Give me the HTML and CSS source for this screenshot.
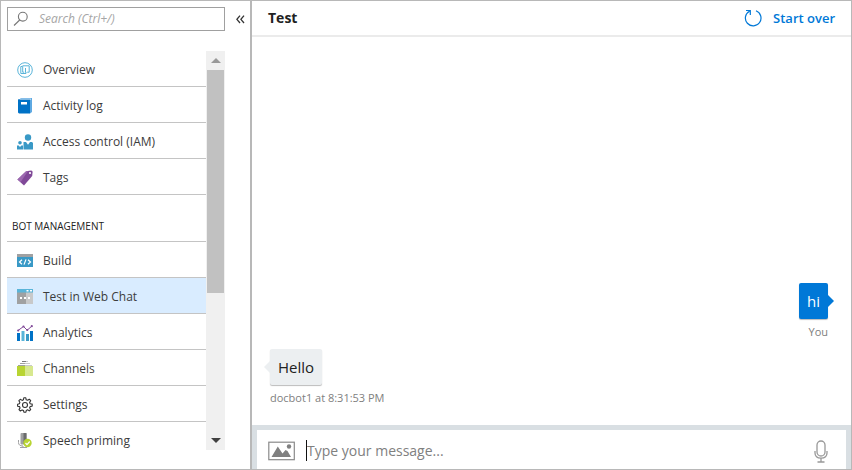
FILE: index.html
```html
<!DOCTYPE html>
<html lang="en">
<head>
<meta charset="utf-8">
<title>Test in Web Chat</title>
<link rel="stylesheet" href="styles.css">
</head>
<body>
<div class="app">
  <aside class="sidebar">
    <div class="search-row">
      <label class="search">
        <svg width="16" height="16" viewBox="0 0 16 16" fill="none" stroke="#777" stroke-width="1.1" aria-hidden="true"><circle cx="9.800" cy="5.700" r="4.400"/><path d="M6.700 9 1 14.500"/></svg>
        <input type="search" aria-label="Search" placeholder="Search (Ctrl+/)">
      </label>
      <button class="collapse" aria-label="Collapse menu">
        <svg width="9" height="9" viewBox="0 0 9 9" fill="none" stroke="#333" stroke-width="1.3"><path d="M4 .7.9 4.3 4 8M8 .7 4.9 4.3 8 8"/></svg>
      </button>
    </div>
    <div class="menu">
      <nav class="list">
        <a href="#"><svg width="16" height="16" viewBox="0 0 16 16" fill="none" stroke="#59b4d9" aria-hidden="true"><circle cx="8" cy="8" r="7.3"/><path d="M5 4.5H3.8v7H9V10M5.700 3.800h6.500v6.400h-2M5.700 3.800v6.400h1.500M8.500 6v4.500"/></svg>Overview</a>
        <a href="#"><svg width="16" height="16" viewBox="0 0 16 16" aria-hidden="true"><path fill="#5ea9e2" d="M3 0h12v14l-2 1.500z"/><path fill="#0072c6" d="M1 1.500 2.500 1H13v14.500H2L1 14.500z"/><path fill="#fff" d="M4 4h6v2.600H4zM2.500.700H14v.7H2.500z"/></svg>Activity log</a>
        <a href="#"><svg width="16" height="16" viewBox="0 0 16 16" fill="#3999c6" aria-hidden="true"><circle cx="11" cy="3.500" r="3.200"/><circle cx="3" cy="8.700" r="1.800"/><path d="M6.500 8H9l2 2.700L13 8h2l1 1v6.500H6.500zM0 11.500h1.700L3 13l1.400-1.500H6v4H0z"/></svg>Access control (IAM)</a>
        <a href="#"><svg width="16" height="16" viewBox="0 0 16 16" aria-hidden="true"><path fill="#804998" d="m.4 9.500 8.700-8.300 5-.8q1.500 0 1.500 1.500L15.200 6 7 15.500z"/><path fill="#9c68b0" d="m.4 9.500 8.700-8.300L11 1 3.700 12z"/><circle cx="13" cy="3" r="1.100" fill="#fff"/></svg>Tags</a>
        <h2>BOT MANAGEMENT</h2>
        <a href="#"><svg width="16" height="16" viewBox="0 0 16 16" aria-hidden="true"><path fill="#a0a1a2" d="M0 1h16v4H0z"/><path fill="#3999c6" d="M0 4h16v10H0z"/><path fill="none" stroke="#fff" stroke-width="1.200" d="M5 6.800 2.500 9 5 11.200M11 6.800 13.500 9 11 11.200M9 6.400l-2 5.200"/></svg>Build</a>
        <a href="#" class="active" aria-current="page"><svg width="16" height="16" viewBox="0 0 16 16" aria-hidden="true"><path fill="#a0a1a2" d="M0 0h9v15H0z"/><path fill="#c8c9ca" d="M9 3h7v12H9z"/><path fill="#59b4d9" d="M0 0h16v3.500H0z"/><path fill="#fff" d="M9.500 1h2v1.500h-2zM13 1h2v1.500h-2zM3 8h2v2H3zM7 8h2v2H7zM11 8h2v2h-2z"/></svg>Test in Web Chat</a>
        <a href="#"><svg width="16" height="16" viewBox="0 0 16 16" aria-hidden="true"><path fill="#0072c6" d="M0 8h3v8H0zM13 6h3v10h-3z"/><path fill="#59b4d9" d="M4.500 6h3v10h-3z"/><path fill="#3999c6" d="M9 9h3v7H9z"/><path fill="none" stroke="#804998" d="m1 5.500 5.500-4 3.700 3.700L15 1"/><g fill="#804998"><circle cx="1.200" cy="5.500" r="1.100"/><circle cx="6.500" cy="1.500" r="1.100"/><circle cx="10.200" cy="5" r="1.100"/><circle cx="14.800" cy="1.200" r="1.100"/></g></svg>Analytics</a>
        <a href="#"><svg width="16" height="16" viewBox="0 0 16 16" aria-hidden="true"><path fill="#7a7a7a" d="M5 0h4v1H5z"/><path fill="#c8c9ca" d="M9 0h2v1H9zM8 2h5v1H8zM8 4h7v1H8z"/><path fill="#a0a1a2" d="M3 2h5v1H3zM1 4h7v1H1z"/><path fill="#b8d432" d="M0 5h8v10H0z"/><path fill="#d7e88f" d="M8 5h8v10H8z"/></svg>Channels</a>
        <a href="#"><svg width="16" height="16" viewBox="0 0 16 16" fill="none" stroke="#333" stroke-width="1.100" stroke-linejoin="round" aria-hidden="true"><path d="m6.800.800-.4 2-1.300.6-1.800-1.100-1.400 1.400 1 1.800-.6 1.300-1.700.4v2l1.900.4.600 1.300-1.100 1.700 1.400 1.400 1.700-1.100 1.400.6.400 1.700h2l.4-1.800 1.300-.6 1.700 1.100 1.400-1.400-1.100-1.700.6-1.300 2-.4v-2l-2-.4-.6-1.300 1.100-1.700-1.400-1.500-1.700 1.100-1.400-.5-.4-2z"/><circle cx="8" cy="8" r="2.500"/></svg>Settings</a>
        <a href="#"><svg width="16" height="16" viewBox="0 0 16 16" aria-hidden="true"><path fill="none" stroke="#a0a1a2" d="M1.500 7v2.500q0 3.500 4.500 3.500M6 13v2M3 14.500h7"/><rect x="3.500" width="6" height="11.500" rx="1" fill="#a0a1a2"/><path fill="#6b6c6d" d="M6.500 0h3v11h-3z"/><circle cx="10.500" cy="10" r="4.200" fill="#b8d432"/><path fill="none" stroke="#fff" stroke-width="1.200" d="m8.500 10 1.500 1.700 2.700-3.200"/></svg>Speech priming</a>
      </nav>
      <div class="scrollbar" aria-hidden="true">
        <span class="arrow up"></span>
        <span class="thumb"></span>
        <span class="arrow down"></span>
      </div>
    </div>
  </aside>
  <main class="chat">
    <header>
      <h1>Test</h1>
      <button class="restart">
        <svg width="18" height="18" viewBox="0 0 18 18" fill="none" stroke="#0078d7" stroke-width="1.200" aria-hidden="true"><path d="M12 1.800A7.800 7.800 0 1 1 5.500 2.200M2 1.500h4.300V6"/></svg>
        Start over
      </button>
    </header>
    <section class="messages" aria-label="Conversation">
      <div class="message mine"><p class="bubble">hi</p><span class="meta">You</span></div>
      <div class="message"><p class="bubble">Hello</p><span class="meta">docbot1 at 8:31:53 PM</span></div>
    </section>
    <form class="composer">
      <button type="button" aria-label="Upload image">
        <svg width="28" height="20" viewBox="0 0 28 20" aria-hidden="true"><rect x=".8" y="1.200" width="25.500" height="17.500" fill="none" stroke="#8a8a8a" stroke-width="1.200"/><path fill="#808080" d="m3.500 16 6.300-10.500 4.700 7 3-3.500 2 1 3.500 6z"/><circle cx="21" cy="5.500" r="2.200" fill="#808080"/></svg>
      </button>
      <span class="caret" aria-hidden="true"></span>
      <input type="text" aria-label="Message" placeholder="Type your message...">
      <button type="button" aria-label="Speak">
        <svg width="14" height="24" viewBox="0 0 14 24" fill="none" stroke="#999" stroke-width="1.300" aria-hidden="true"><rect x="3" y="2" width="8" height="15" rx="4"/><path d="M1 12v2q0 5 6 5.200Q13 19 13 14v-2M7 19v4M3.500 23h7"/></svg>
      </button>
    </form>
  </main>
</div>
</body>
</html>
```
FILE: styles.css
```css
* {
  box-sizing: border-box;
}

body {
  margin: 0;
  background: #fff;
  color: #3c3c3c;
  font: 12px/20px "Segoe UI", "Open Sans", "Noto Sans", sans-serif;
}

h1, h2, p {
  margin: 0;
}

button, input {
  min-width: 0;
  padding: 0;
  border: 0;
  background: none;
  color: inherit;
  font: inherit;
  outline: 0;
}

svg {
  display: block;
  flex: none;
}

.app {
  display: grid;
  grid-template-columns: 251px 1fr;
  height: 100vh;
  border: 1px solid #b8b8b8;
  overflow: hidden;
}

.sidebar {
  display: flex;
  flex-direction: column;
  gap: 20px;
  min-height: 0;
  padding: 6px 5px 19px 6px;
  border-right: 2px solid #b8b8b8;
}

.search-row {
  display: flex;
  align-items: center;
  gap: 11px;
}

.search {
  display: flex;
  align-items: center;
  flex: 1;
  gap: 10px;
  height: 24px;
  padding: 0 5px;
  border: 1px solid #a0a0a0;
}

.search input {
  flex: 1;
  font-style: italic;
}

.search input::placeholder {
  color: #a6a6a6;
  opacity: 1;
}

.menu {
  display: flex;
  flex: 1;
  min-height: 0;
  margin-right: 20px;
}

.list {
  flex: 1;
  overflow: hidden;
}

.list a {
  display: flex;
  align-items: center;
  gap: 10px;
  height: 36px;
  padding: 2px 10px 0;
  border-bottom: 1px solid #c4c4c4;
  color: inherit;
  text-decoration: none;
}

.list .active {
  background: #d9ecff;
}

.list h2 {
  height: 47px;
  padding: 21px 5px 0;
  border-bottom: 1px solid #c4c4c4;
  font-size: 10px;
  font-weight: 400;
  color: #222;
}

.scrollbar {
  display: flex;
  flex-direction: column;
  width: 19px;
  padding: 0 1px;
  background: #f0f0f0;
}

.arrow {
  display: flex;
  align-items: center;
  justify-content: center;
  height: 19px;
}

.arrow::before {
  content: "";
  border: 5px solid transparent;
  border-top-width: 0;
  border-bottom-color: #999;
}

.down {
  margin-top: auto;
}

.down::before {
  border-width: 5px 5px 0;
  border-top-color: #404040;
}

.thumb {
  height: 56%;
  background: #c1c1c1;
}

.chat {
  display: flex;
  flex-direction: column;
  min-width: 0;
  min-height: 0;
}

header {
  display: flex;
  align-items: center;
  justify-content: space-between;
  height: 36px;
  padding: 0 16px;
  border-bottom: 2px solid #ebebeb;
}

h1 {
  font-size: 14px;
  font-weight: 700;
  color: #222;
}

.restart {
  display: flex;
  align-items: center;
  gap: 11px;
  color: #0078d7;
  font-size: 13px;
  font-weight: 600;
}

.messages {
  display: flex;
  flex: 1;
  flex-direction: column;
  justify-content: flex-end;
  gap: 7px;
  min-height: 0;
  padding: 0 23px 17px 18px;
}

.message {
  display: flex;
  flex-direction: column;
  align-items: flex-start;
  gap: 3px;
}

.mine {
  align-items: flex-end;
}

.bubble {
  position: relative;
  padding: 8px;
  border-radius: 2px;
  background: #eceff1;
  box-shadow: 0 1px 1px #0004;
  color: #222;
  font-size: 15px;
  line-height: 20px;
}

.bubble::before {
  content: "";
  position: absolute;
  top: 12px;
  right: 100%;
  border: 6px solid transparent;
  border-left-width: 0;
  border-right-color: #eceff1;
}

.mine .bubble {
  background: #0078d7;
  color: #fff;
}

.mine .bubble::before {
  right: auto;
  left: 100%;
  border-width: 6px 0 6px 6px;
  border-left-color: #0078d7;
}

.meta {
  color: #808080;
  font-size: 11px;
}

.composer {
  display: flex;
  align-items: center;
  height: 44px;
  padding: 2px 18px 0 11px;
  border: 5px solid #d9dfe3;
  border-bottom: 0;
}

.caret {
  width: 1px;
  height: 21px;
  margin-left: 10px;
  background: #111;
}

.composer input {
  flex: 1;
  font-size: 14px;
}

.composer input::placeholder {
  color: #808080;
  opacity: 1;
}
```
